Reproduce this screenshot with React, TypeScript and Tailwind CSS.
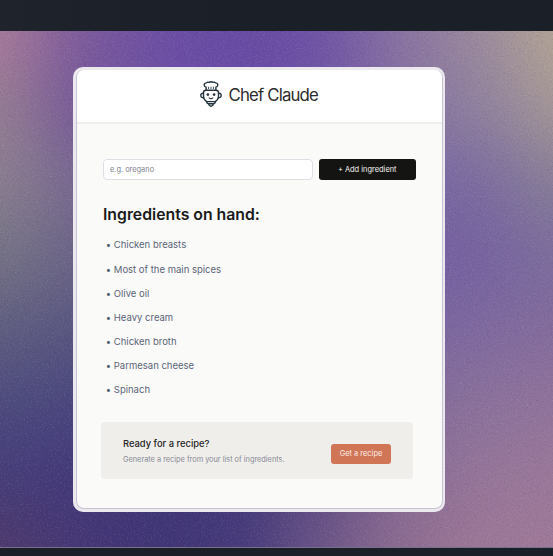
import React from "react";

const ingredients = [
  "Chicken breasts",
  "Most of the main spices",
  "Olive oil",
  "Heavy cream",
  "Chicken broth",
  "Parmesan cheese",
  "Spinach",
];

// Colour mesh of the wallpaper, row by row; blurred into one soft gradient.
const mesh = [
  ["#aa7b9b", "#7d5a9b", "#6c4ea4", "#664aa4", "#6e52a5", "#8a72a2", "#9c8b9c", "#b6a794"],
  ["#967d92", "#765899", "#6c4ea4", "#664aa4", "#6e54a5", "#8472a2", "#91829f", "#a79a96"],
  ["#8c8090", "#786890", "#6c4ea4", "#6c50a4", "#7054a2", "#7864a2", "#7b6ca0", "#8a8097"],
  ["#767485", "#6c6588", "#60508c", "#6050a0", "#6c58a2", "#705ea0", "#7662a0", "#7b6d9c"],
  ["#605e80", "#585680", "#504a80", "#584a90", "#7058a0", "#7862a0", "#7e699f", "#836b9c"],
  ["#4d4b7e", "#4a477e", "#443e7a", "#483e7e", "#6c5490", "#806a98", "#8b729c", "#91739b"],
  ["#453d79", "#423879", "#403577", "#423879", "#5c4880", "#866894", "#967699", "#9a789a"],
  ["#4e396c", "#453675", "#3f3475", "#45397a", "#6c5688", "#8e6d90", "#9d7798", "#a07a98"],
];

function Wallpaper() {
  return (
    <svg className="absolute inset-0 h-full w-full" viewBox="0 0 553 517" preserveAspectRatio="none" aria-hidden="true">
      <defs>
        <filter id="soften" x="-30%" y="-30%" width="160%" height="160%" colorInterpolationFilters="sRGB">
          <feGaussianBlur stdDeviation="32" />
        </filter>
        <filter id="grain" x="0" y="0" width="100%" height="100%" colorInterpolationFilters="sRGB">
          <feTurbulence type="fractalNoise" baseFrequency="0.7" numOctaves="2" seed="4" />
          <feColorMatrix values="0 0 0 0 0.85  0 0 0 0 0.82  0 0 0 0 0.85  2.4 0 0 0 -1.25" />
        </filter>
        <filter id="shade" x="0" y="0" width="100%" height="100%" colorInterpolationFilters="sRGB">
          <feTurbulence type="fractalNoise" baseFrequency="0.7" numOctaves="2" seed="9" />
          <feColorMatrix values="0 0 0 0 0.2  0 0 0 0 0.15  0 0 0 0 0.3  2.4 0 0 0 -1.25" />
        </filter>
      </defs>
      <g filter="url(#soften)">
        {mesh.map((row, r) =>
          row.map((color, c) => {
            const x0 = c === 0 ? -160 : c * 80 - 40;
            const x1 = c === 7 ? 720 : c * 80 + 41;
            const y0 = r === 0 ? -160 : r * 74 - 37;
            const y1 = r === 7 ? 680 : r * 74 + 38;
            return <rect key={`${r}-${c}`} x={x0} y={y0} width={x1 - x0} height={y1 - y0} fill={color} />;
          }),
        )}
      </g>
      <rect width="553" height="517" filter="url(#grain)" opacity="0.17" />
      <rect width="553" height="517" filter="url(#shade)" opacity="0.17" />
    </svg>
  );
}

function ChefIcon() {
  return (
    <svg
      className="h-[26px] w-[22px] shrink-0"
      viewBox="0 0 22 26"
      fill="none"
      stroke="#26363f"
      strokeWidth="1.4"
      strokeLinecap="round"
      strokeLinejoin="round"
      aria-hidden="true"
    >
      <path d="M6.1 9V6.2C3.4 5.6 3.6 1.9 6.5 1.9C7.1 1.1 8.1 1 8.9 1.4C9.8 .5 12.2 .5 13.1 1.4C13.9 1 14.9 1.1 15.5 1.9C18.4 1.9 18.6 5.6 15.9 6.2V9" />
      <path d="M8.6 6.2V7.6M11 6.2V7.6M13.4 6.2V7.6" strokeWidth="0.9" />
      <path d="M3.5 11.2C3.5 9.8 4.5 9.3 6.1 9.2H15.9C17.5 9.3 18.5 9.8 18.5 11.2V15.2C18.5 17.8 16.9 19.6 14.7 20.6H7.3C5.1 19.6 3.5 17.8 3.5 15.2Z" />
      <path d="M3.3 12.2C1.6 12 .8 13.1 .8 14.5S1.8 17 3.8 16.9M18.7 12.2C20.4 12 21.2 13.1 21.2 14.5S20.2 17 18.2 16.9" />
      <path d="M6.5 20.6C6.7 21.9 7.4 22.5 8.4 22.8C8.9 24.4 9.6 25.2 11 25.2S13.1 24.4 13.6 22.8C14.6 22.5 15.3 21.9 15.5 20.6M8.8 22.8H13.2" />
      <circle cx="7.9" cy="13.6" r="1.35" fill="#26363f" stroke="none" />
      <circle cx="14.1" cy="13.6" r="1.35" fill="#26363f" stroke="none" />
      <path d="M9.1 16.9C10.2 17.8 11.8 17.8 12.9 16.9" strokeWidth="1.1" />
    </svg>
  );
}

export default function App() {
  return (
    <div className="flex h-[556px] w-[553px] flex-col overflow-hidden bg-[#1b1f28] font-['Inter',sans-serif]">
      <div className="h-[31px] shrink-0 bg-linear-to-r from-[#1e232c] to-[#1b1f27] to-45%" />
      <div className="relative flex h-[517px] shrink-0 justify-center overflow-hidden border-b border-[#77708c] pr-[35px] pt-9">
        <Wallpaper />
        <div className="relative h-[445px] w-[372px] rounded-[10px] bg-[#ebe9ed] p-[3px] pr-[2px]">
          <div className="flex h-full flex-col overflow-hidden rounded-[8px] border border-t-0 border-[#c8c2d6] bg-[#fafaf8]">
            <header className="flex h-[54px] shrink-0 items-start justify-center gap-[6.5px] border-b-2 border-[#eeeeee] bg-white pt-[11px] pr-px">
              <ChefIcon />
              <span className="pt-px text-[16.8px] leading-[26px] font-normal tracking-[-0.85px] whitespace-nowrap text-[#2c2c2c]">
                Chef Claude
              </span>
            </header>
            <main className="flex flex-col pl-[26px] pt-[35px]">
              <form className="flex gap-1.5" onSubmit={(e) => e.preventDefault()}>
                <input
                  aria-label="Add ingredient"
                  placeholder="e.g. oregano"
                  className="h-[20.5px] w-[210px] rounded-[4px] border border-[#dcdee4] bg-white px-1.5 text-[7.4px] text-[#6b7280] outline-none placeholder:text-[#7d8390]"
                />
                <button className="h-[20.5px] w-[96.5px] rounded-[3px] bg-[#141412] text-[7.45px] text-[#f4f4f2]">
                  + Add ingredient
                </button>
              </form>
              <h2 className="mt-[24.5px] text-[15.8px] leading-[22px] font-semibold whitespace-nowrap text-[#1a1a1a]">
                Ingredients on hand:
              </h2>
              <ul className="mt-[7.4px] flex flex-col">
                {ingredients.map((item) => (
                  <li key={item} className="flex h-[24.17px] items-center pl-[2.8px] text-[9.5px] text-[#5a6578]">
                    <span className="w-[8px] shrink-0 text-[#4b586d]">•</span>
                    {item}
                  </li>
                ))}
              </ul>
              <section className="-ml-[2px] mt-[19.6px] flex h-[57px] w-[312px] rounded-[4px] bg-[#f0eeeb] pl-[22px]">
                <div className="w-[208px] pt-[15px] whitespace-nowrap">
                  <h3 className="text-[9.4px] leading-[13px] font-medium text-[#242424]">Ready for a recipe?</h3>
                  <p className="mt-[3.5px] text-[7.35px] leading-[11px] text-[#858a94]">
                    Generate a recipe from your list of ingredients.
                  </p>
                </div>
                <button className="mt-[22px] h-5 w-[60px] rounded-[3px] bg-[#d17557] text-[7.45px] whitespace-nowrap text-[#fbeee8]">
                  Get a recipe
                </button>
              </section>
            </main>
          </div>
        </div>
      </div>
    </div>
  );
}
